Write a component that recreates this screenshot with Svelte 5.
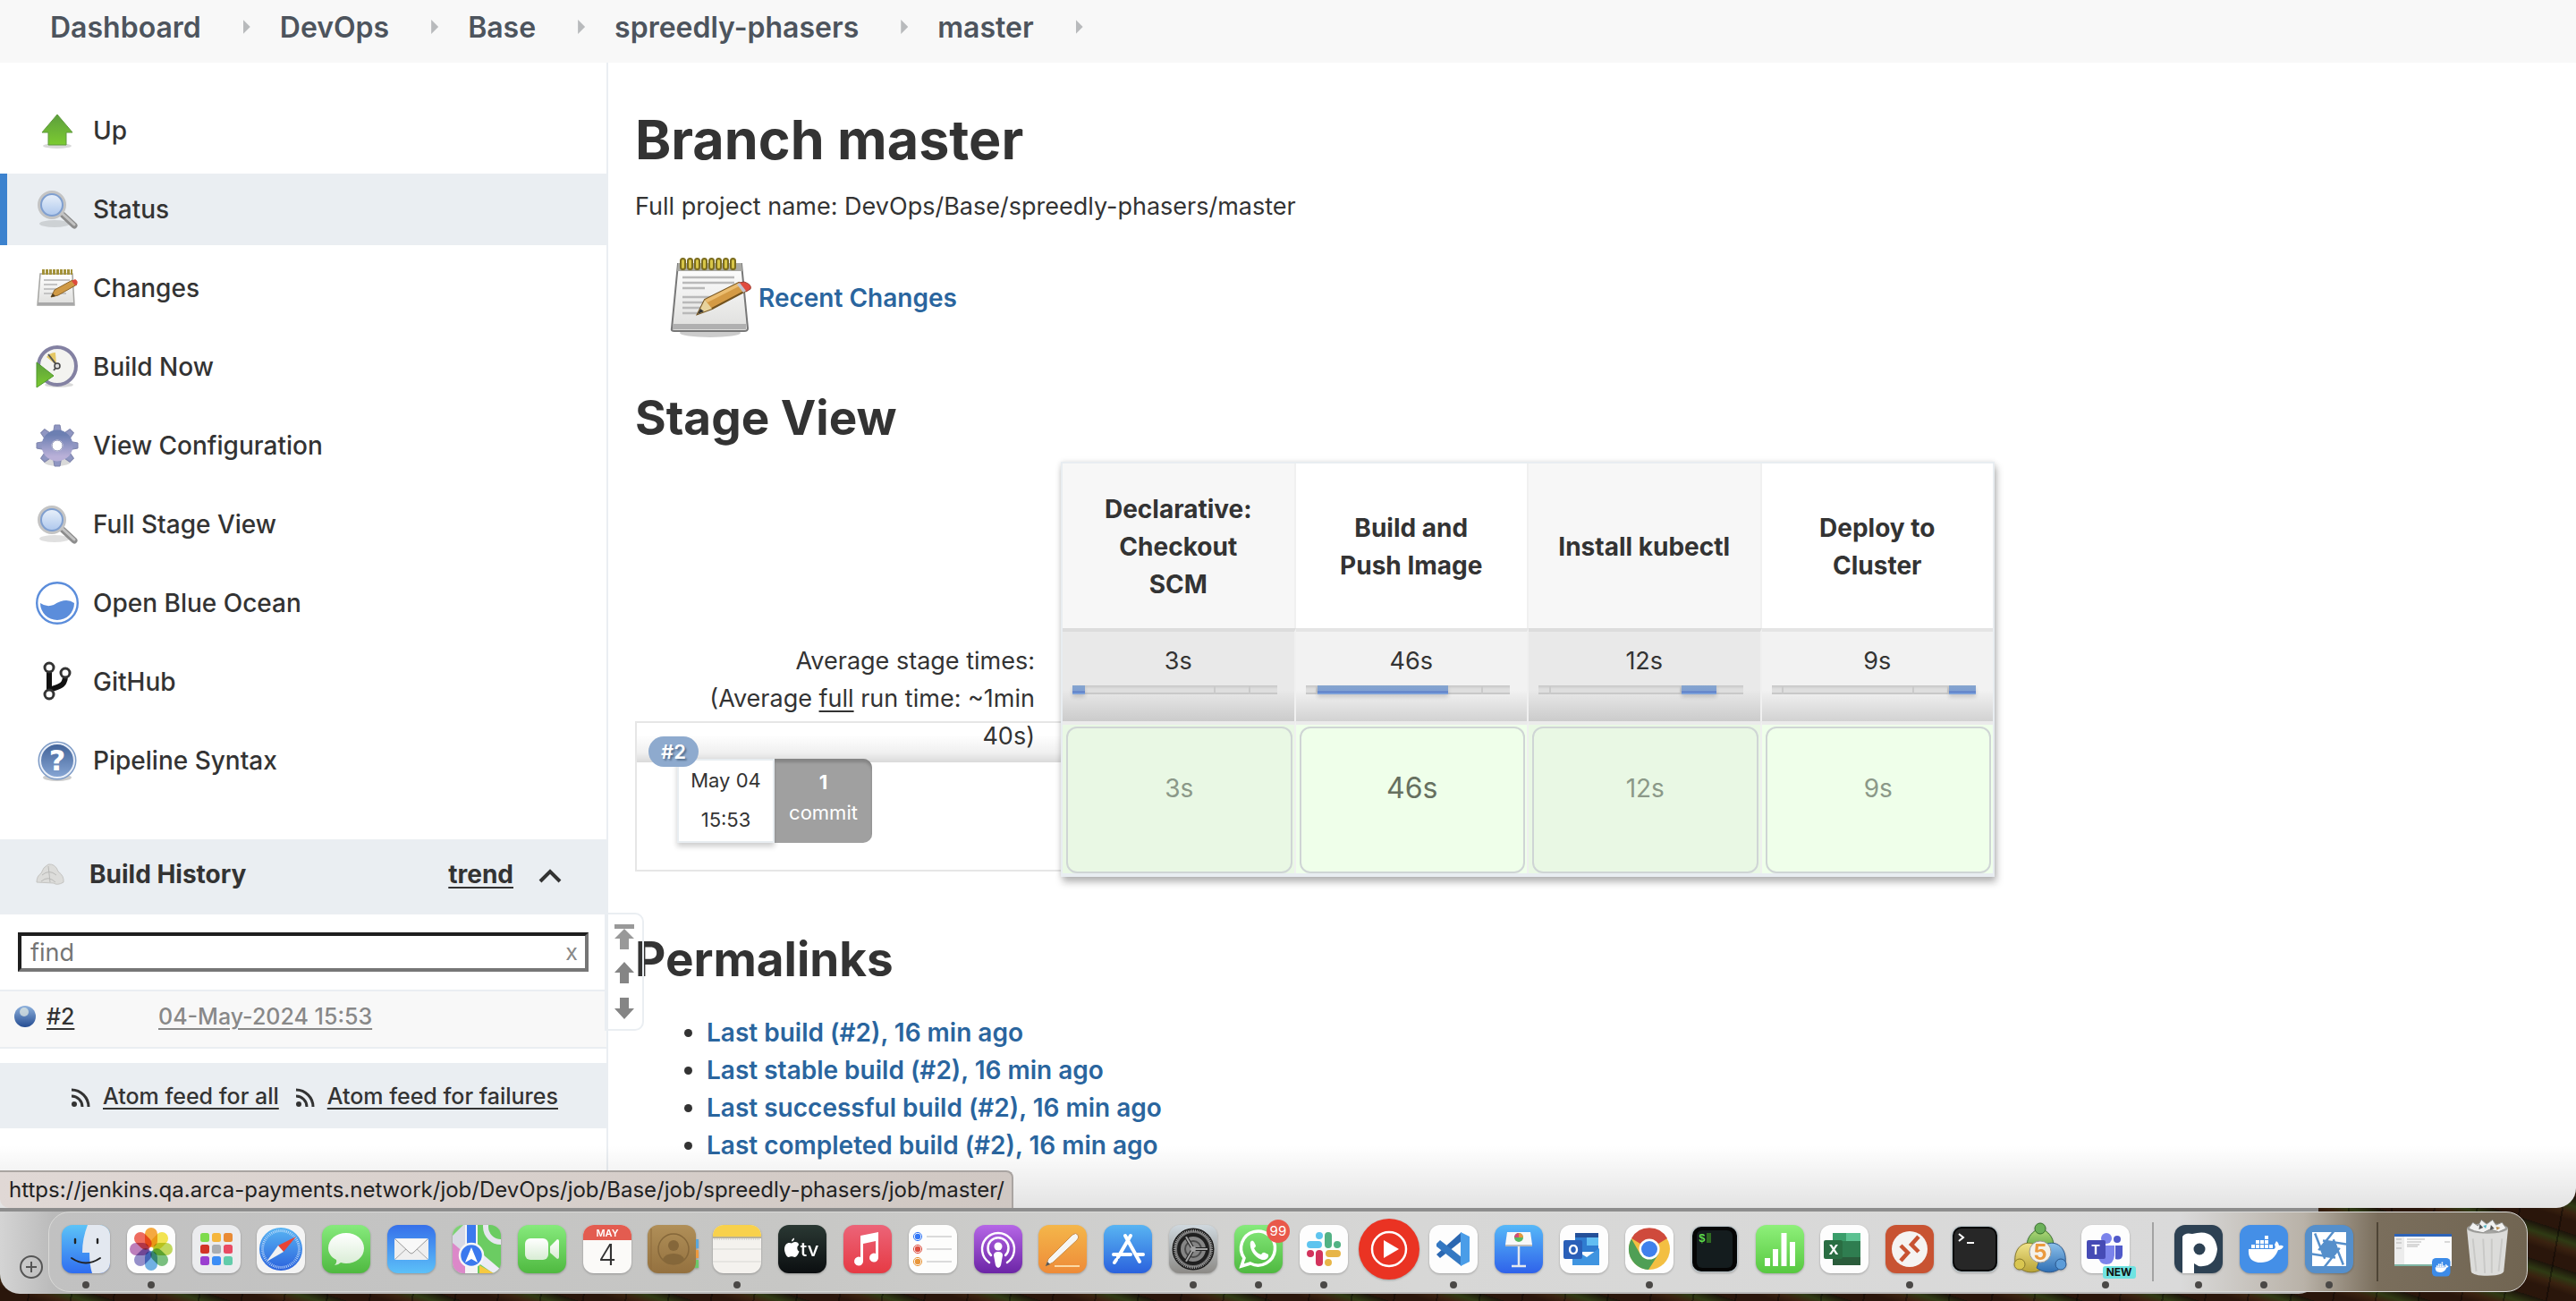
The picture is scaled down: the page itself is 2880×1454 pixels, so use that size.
<script>
  const crumbs = ['Dashboard', 'DevOps', 'Base', 'spreedly-phasers', 'master'];

  const tasks = [
    { icon: 'up', label: 'Up' },
    { icon: 'search', label: 'Status', active: true },
    { icon: 'notepad', label: 'Changes' },
    { icon: 'clock', label: 'Build Now' },
    { icon: 'gear', label: 'View Configuration' },
    { icon: 'search', label: 'Full Stage View' },
    { icon: 'ocean', label: 'Open Blue Ocean' },
    { icon: 'fork', label: 'GitHub' },
    { icon: 'help', label: 'Pipeline Syntax' },
  ];

  // size is the stage's share of the whole run, in percent
  const stages = [
    { name: 'Declarative: Checkout SCM', time: '3s', size: 6 },
    { name: 'Build and Push Image', time: '46s', size: 64 },
    { name: 'Install kubectl', time: '12s', size: 17 },
    { name: 'Deploy to Cluster', time: '9s', size: 13 },
  ];

  const permalinks = [
    'Last build (#2), 16 min ago',
    'Last stable build (#2), 16 min ago',
    'Last successful build (#2), 16 min ago',
    'Last completed build (#2), 16 min ago',
  ];

  const apps = [
    ['finder', 1], ['photos', 1], ['launchpad'], ['safari'], ['messages'], ['mail'], ['maps'], ['facetime'],
    ['calendar'], ['contacts'], ['notes', 1], ['tv'], ['music'], ['reminders'], ['podcasts'], ['pages'],
    ['appstore'], ['settings', 1], ['whatsapp', 1], ['slack', 1], ['ytmusic'], ['vscode', 1], ['keynote'],
    ['outlook'], ['chrome', 1], ['iterm'], ['numbers'], ['excel'], ['remote', 1], ['terminal'],
    ['metatrader'], ['teams', 1],
  ];
  const recent = [['postico', 1], ['docker', 1], ['capture', 1]];

  const petals = ['#f6a12b', '#f3e23e', '#bcd64c', '#6dba72', '#62aae2', '#8b84c6', '#b871b6', '#ee5c4e'];
  const pads = ['#7ddb4c', '#f5b63c', '#e98b35', '#d23427', '#a9adb1', '#e94b63', '#9b3fd0', '#3c8df5', '#62ccaa'];
  const slots = [0, 45, 90, 135, 180, 225, 270, 315];
  const blades = [0, 60, 120, 180, 240, 300];
  const ticks = Array.from({ length: 60 }, (_, i) => i * 6);
</script>

{#snippet taskIcon(name)}
  <svg class="task-icon" viewBox="0 0 48 48" aria-hidden="true">
    {#if name === 'up'}
      <ellipse cx="24" cy="41" rx="16" ry="3" fill="#000" opacity=".15" />
      <path d="M24 6 41 26H34V40H14V26H7Z" fill="url(#g-up)" stroke="#5f9a3c" />
    {:else if name === 'search'}
      <ellipse cx="21" cy="40" rx="17" ry="4" fill="#000" opacity=".12" />
      <path d="M29 29 43 42" stroke="#8d8d8d" stroke-width="7" stroke-linecap="round" />
      <path d="M30 29 43 41" stroke="#c3c3c3" stroke-width="3" stroke-linecap="round" />
      <circle cx="18" cy="19" r="14" fill="url(#g-lens)" stroke="#c4c4c4" stroke-width="4" />
      <circle cx="18" cy="19" r="12" fill="none" stroke="#7f9fd0" stroke-width="2" />
    {:else if name === 'notepad'}
      <path d="M5 8H41L43 43H2Z" fill="url(#g-paper)" stroke="#a5a5a2" stroke-width="1.5" />
      <path d="M2 40H43V43H2Z" fill="#a8a8a8" />
      <path d="M7 6H41" stroke="#a3923a" stroke-width="6" stroke-dasharray="3 1" />
      <path d="M9 15H38M9 20H24M9 25H30M9 30H34" stroke="#c3c3c3" stroke-width="2" />
      <path d="M17 34 21 26 41 15 46 20 25 32Z" fill="#d09a45" stroke="#8c6428" />
      <path d="M40 16 44 14Q48 16 46 20L44 21Z" fill="#dd4a3c" />
      <path d="M17 34 19 30 22 33Z" fill="#4a3a20" />
    {:else if name === 'clock'}
      <ellipse cx="26" cy="44" rx="16" ry="3" fill="#000" opacity=".15" />
      <circle cx="24" cy="23" r="21" fill="#f3f3f0" stroke="#8381a2" stroke-width="4" />
      <path d="M23 22 12 13Q16 8 22 8Z" fill="#e5c865" />
      <path d="M14 10 24 23 20 28" stroke="#555" stroke-width="2" fill="none" />
      <circle cx="24" cy="23" r="3" fill="#ddd" stroke="#444" stroke-width="1.5" />
      <path d="M1 19V47L20 34Z" fill="url(#g-up)" stroke="#4f9a2c" />
    {:else if name === 'gear'}
      <ellipse cx="24" cy="42" rx="15" ry="5" fill="#000" opacity=".15" />
      {#each slots as a}
        <path d="M19 12 21 1H27L29 12Z" fill="#8f96c2" stroke="#7d83ab" transform="rotate({a} 24 24)" />
      {/each}
      <circle cx="24" cy="24" r="12" fill="none" stroke="url(#g-gear)" stroke-width="11" />
      <circle cx="24" cy="24" r="6" fill="#fff" stroke="#8a8fb4" />
    {:else if name === 'ocean'}
      <circle cx="24" cy="24" r="22.8" fill="#fff" stroke="#5b8ddb" stroke-width="2.4" />
      <path d="M5 24Q12 29 20 26Q34 17 43 24A19 19 0 0 1 5 24Z" fill="#5b8ddb" />
    {:else if name === 'fork'}
      <path d="M15 12V34M15 33C26 29 33 29 33 17" stroke="#111" stroke-width="6" fill="none" />
      <circle cx="15" cy="8" r="5" fill="#fff" stroke="#333" stroke-width="3" />
      <circle cx="33" cy="14" r="5" fill="#fff" stroke="#333" stroke-width="3" />
      <circle cx="15" cy="38" r="5" fill="#fff" stroke="#333" stroke-width="3" />
    {:else if name === 'help'}
      <ellipse cx="24" cy="43" rx="16" ry="4" fill="#000" opacity=".2" />
      <circle cx="24" cy="24" r="20" fill="url(#g-help)" stroke="#7d9bc6" stroke-width="3" />
      <circle cx="24" cy="24" r="19" fill="none" stroke="#e8eef8" stroke-width="2" />
      <text x="24" y="35" class="q">?</text>
    {/if}
  </svg>
{/snippet}

{#snippet feed()}
  <svg class="feed" viewBox="0 0 22 22" aria-hidden="true">
    <circle cx="4" cy="18" r="3" fill="#333" />
    <path d="M1 9A12 12 0 0 1 13 21M1 2A19 19 0 0 1 20 21" fill="none" stroke="#333" stroke-width="3" />
  </svg>
{/snippet}

{#snippet tile(fill)}
  <rect width="54" height="54" rx="12" {fill} />
{/snippet}

{#snippet whale()}
  <path d="M10 27H38Q41 26 39 22L41 18Q44 20 44 23Q47 22 49 24Q47 28 43 28C39 38 32 42 24 42C14 42 9 37 10 27Z" fill="#fff" />
  <path d="M13 22h4v4h-4zM18 22h4v4h-4zM23 22h4v4h-4zM28 22h4v4h-4zM33 22h4v4h-4zM18 17h4v4h-4zM23 17h4v4h-4zM28 17h4v4h-4zM28 12h4v4h-4z" fill="#fff" />
{/snippet}

{#snippet appIcon(name)}
  <svg class="app" viewBox="0 0 54 54" role="img" aria-label={name}>
    {#if name === 'finder'}
      {@render tile('url(#d-finder)')}
      <path d="M29 0C25 10 23 20 23 31H31C31 40 32 48 34 54H42A12 12 0 0 0 54 42V12A12 12 0 0 0 42 0Z" fill="#e3e8f0" />
      <path d="M15 16V20M40 16V20" stroke="#222" stroke-width="2.4" stroke-linecap="round" />
      <path d="M11 37Q27 48 43 37" stroke="#222" stroke-width="2" fill="none" stroke-linecap="round" />
    {:else if name === 'photos'}
      {@render tile('#fdfdfd')}
      {#each petals as p, i}
        <rect class="petal" x="20" y="3" width="14" height="22" rx="7" fill={p} transform="rotate({i * 45} 27 27)" />
      {/each}
    {:else if name === 'launchpad'}
      {@render tile('#ebecee')}
      {#each pads as p, i}
        <rect x={9 + (i % 3) * 13} y={9 + Math.floor(i / 3) * 13} width="10" height="10" rx="2.5" fill={p} />
      {/each}
    {:else if name === 'safari'}
      {@render tile('#f4f4f4')}
      <circle cx="27" cy="27" r="24" fill="url(#d-blue)" />
      {#each ticks as t}
        <path d="M27 5V8" stroke="#cfe4fb" stroke-width=".8" transform="rotate({t} 27 27)" />
      {/each}
      <path d="M44 13 24 23 30 30Z" fill="#ea4335" />
      <path d="M11 41 24 23 30 30Z" fill="#f2f2f2" />
    {:else if name === 'messages'}
      {@render tile('url(#d-green)')}
      <path d="M27 9C38 9 47 16 47 26S38 43 27 43Q24 43 21 42 18 45 14 45 17 42 16 39C10 36 7 31 7 26 7 16 16 9 27 9Z" fill="url(#d-white)" />
    {:else if name === 'mail'}
      {@render tile('url(#d-mail)')}
      <rect x="8" y="15" width="38" height="24" rx="2" fill="#efefef" />
      <path d="M9 38 22 26M45 38 32 26" stroke="#aaa" fill="none" />
      <path d="M9 16 25 31Q27 33 29 31L45 16" fill="#f8f8f8" stroke="#999" />
    {:else if name === 'maps'}
      <clipPath id="c-maps"><rect width="54" height="54" rx="12" /></clipPath>
      <g clip-path="url(#c-maps)">
        <rect width="54" height="54" fill="#6bcc62" />
        <path d="M0 0H14V54H0Z" fill="#d8d9e4" />
        <path d="M0 12 12 0H0Z" fill="#7ed274" />
        <path d="M0 20 14 32V54H0Z" fill="#dc88c9" />
        <path d="M14 0H28V54H14Z" fill="#f4f4f4" />
        <path d="M16 0H26V26H16Z" fill="#3b79ee" />
        <path d="M28 28 54 50V60L28 42Z" fill="#ececf4" />
        <path d="M30 45 46 54H30Z" fill="#f6c940" />
        <circle cx="54" cy="2" r="17" fill="none" stroke="#e6e6ee" stroke-width="6" />
        <circle cx="21" cy="34" r="13" fill="#3b79ee" stroke="#f6f6f6" stroke-width="2.5" />
        <path d="M21 25 28 42 21 38 14 42Z" fill="#fff" />
      </g>
    {:else if name === 'facetime'}
      {@render tile('url(#d-green)')}
      <rect x="8" y="15" width="26" height="24" rx="6" fill="url(#d-white)" />
      <path d="M36 24 44 16Q46 16 46 18V36Q46 38 44 38L36 31Z" fill="url(#d-white)" />
    {:else if name === 'calendar'}
      {@render tile('#fbfaf8')}
      <path d="M0 17V12A12 12 0 0 1 12 0H42A12 12 0 0 1 54 12V17Z" fill="#e35c50" />
      <text x="27" y="13" class="may">MAY</text>
      <text x="27" y="45" class="day">4</text>
    {:else if name === 'contacts'}
      <path d="M50 16h7v10h-7z" fill="#5aa7dd" /><path d="M50 28h7v9h-7z" fill="#ee9a3e" /><path d="M50 39h7v9h-7z" fill="#6cc96a" />
      {@render tile('url(#d-brown)')}
      <path d="M4 4V50" stroke="#8f6d3c" />
      <circle cx="29" cy="27" r="17" fill="none" stroke="#85673a" stroke-width="1.5" />
      <circle cx="29" cy="23" r="6" fill="#85673a" />
      <path d="M17 38Q20 32 29 32T41 38Q36 44 29 44T17 38Z" fill="#85673a" />
    {:else if name === 'notes'}
      {@render tile('#f4f2ee')}
      <path d="M0 13V12A12 12 0 0 1 12 0H42A12 12 0 0 1 54 12V13Z" fill="#f8d14c" />
      <path d="M0 14H54" stroke="#a79c7c" stroke-width="1.5" />
      <path d="M1 16H53" stroke="#bbb" stroke-dasharray="1 1" />
      <path d="M0 27H54M0 41H54" stroke="#d8d8d4" />
    {:else if name === 'tv'}
      {@render tile('url(#d-dark)')}
      <path d="M16 20C18 18.5 23 18.5 23 22.5 20.5 24 21 28.5 23.5 29.5 22.5 33 20.5 36 18.5 36 17 36 16.5 35.3 15 35.3S13 36 11.7 36C9.5 36 7 31 7 27 7 22 10.5 19.5 13 20 14.5 20.5 15 20.5 16 20ZM15 18.5Q15 15.5 18 14.5 18.3 17.5 15 18.5Z" fill="#fff" />
      <text x="35" y="35" class="tv">tv</text>
    {:else if name === 'music'}
      {@render tile('url(#d-red)')}
      <path d="M19 12 39 8V36A5 5 0 1 1 36 32V18L22 21V40A5 5 0 1 1 19 36Z" fill="#fff" />
    {:else if name === 'reminders'}
      {@render tile('#fdfdfc')}
      {#each ['#3478f6', '#dd4f40', '#e8963a'] as c, i}
        <circle cx="10" cy={13 + i * 14} r="3.2" fill={c} />
        <circle cx="10" cy={13 + i * 14} r="4.6" fill="none" stroke={c} />
        <path d="M20 {13 + i * 14}H48" stroke="#c4c4c4" stroke-width="1.2" />
      {/each}
    {:else if name === 'podcasts'}
      {@render tile('url(#d-purple)')}
      <path d="M17 42A18 18 0 1 1 37 42M19 34A11.5 11.5 0 1 1 35 34" fill="none" stroke="#fff" stroke-width="2.5" stroke-linecap="round" />
      <circle cx="27" cy="24" r="4.5" fill="#fff" />
      <path d="M22 34Q22 30 27 30T32 34L30 45Q29 48 27 48T24 45Z" fill="#fff" />
    {:else if name === 'pages'}
      {@render tile('url(#d-orange)')}
      <path d="M8 46 11 38 38 11Q42 8 44 11T43 17L16 42Z" fill="#f6f6f4" stroke="#c98c46" />
      <path d="M8 46 10 41 13 44Z" fill="#555" />
      <path d="M18 46H46" stroke="#fbd9a4" stroke-width="2" />
    {:else if name === 'appstore'}
      {@render tile('url(#d-blue)')}
      <path d="M24 12 40 41M30 12 16 36M11 33H30M36 33H44M14 39 12 42" stroke="#fff" stroke-width="4" stroke-linecap="round" />
    {:else if name === 'settings'}
      {@render tile('url(#d-steel)')}
      <circle cx="27" cy="27" r="22" fill="#6b6b6b" stroke="#1c1c1c" stroke-width="3" />
      <circle cx="27" cy="27" r="20.5" fill="none" stroke="#9c9c9c" stroke-width="3" stroke-dasharray="1 1" />
      <circle cx="27" cy="27" r="16" fill="#858585" stroke="#1f1f1f" stroke-width="4" />
      <circle cx="27" cy="27" r="9" fill="none" stroke="#4a4a4a" stroke-width="2" />
      {#each [0, 120, 240] as a}
        <path d="M27 27H43" stroke="#1f1f1f" stroke-width="4" transform="rotate({a} 27 27)" />
        <path d="M27 27H43" stroke="#a2a2a2" stroke-width="2" transform="rotate({a} 27 27)" />
      {/each}
      <circle cx="27" cy="27" r="3" fill="#a2a2a2" />
    {:else if name === 'whatsapp'}
      {@render tile('url(#d-green)')}
      <path d="M8 46 11 37A19 19 0 1 1 18 43Z" fill="none" stroke="#fff" stroke-width="3.5" />
      <path d="M18 19Q20 16 22 19L24 23Q24 25 22 26 25 32 30 33 32 30 34 31L38 33Q39 37 34 39C27 40 16 30 18 19Z" fill="#fff" />
    {:else if name === 'slack'}
      {@render tile('#fdfdfd')}
      <g fill="none" stroke-width="8" stroke-linecap="round">
        <path d="M12 22H21M22 12v.1" stroke="#5ec4ee" />
        <path d="M32 12V22M42 22h.1" stroke="#52b284" />
        <path d="M42 32H33M32 42v.1" stroke="#e7b548" />
        <path d="M22 42V32M12 32h.1" stroke="#d2335c" />
      </g>
    {:else if name === 'ytmusic'}
      <circle cx="27" cy="27" r="34" fill="#ea3323" />
      <circle cx="27" cy="27" r="19" fill="none" stroke="#fff" stroke-width="2.5" />
      <path d="M21 17V37L38 27Z" fill="#fff" />
    {:else if name === 'vscode'}
      {@render tile('#fdfdfd')}
      <path d="M8 33 36 8V18L12 37Z" fill="#2b67b1" />
      <path d="M8 21 12 17 36 36V46L8 24Z" fill="#3478c2" />
      <path d="M35 8 45 13V41L35 46Z" fill="#4a9de8" />
    {:else if name === 'keynote'}
      {@render tile('url(#d-key)')}
      <path d="M14 8H40L42 22H12Z" fill="#f8f8f8" /><path d="M12 22H42V24H12Z" fill="#bbb" />
      <circle cx="27" cy="14" r="5" fill="#57b760" /><path d="M27 14V9A5 5 0 0 1 32 14Z" fill="#e8963a" /><path d="M27 14H22A5 5 0 0 1 27 9Z" fill="#d44b76" />
      <path d="M27 24V46M19 46H35" stroke="#e4e8ee" stroke-width="2.5" />
    {:else if name === 'outlook'}
      {@render tile('#fdfdfd')}
      <path d="M17 9H43V30H17Z" fill="#2f7cd0" /><path d="M17 9H43V14H17Z" fill="#234f98" />
      <path d="M30 14H43V23H30Z" fill="#61bdf2" /><path d="M14 26 30 36 44 26V45H14Z" fill="#3f94e0" />
      <rect x="4" y="17" width="21" height="21" rx="2" fill="#2a5fb8" />
      <text x="15" y="33" class="letter">O</text>
    {:else if name === 'chrome'}
      {@render tile('#fdfdfd')}
      <circle cx="27" cy="27" r="23" fill="#f3bf42" />
      <path d="M27 27 7 15A23 23 0 0 1 47 15Z" fill="#cf4a3c" />
      <path d="M27 27 17 33 7 15.5A23 23 0 0 0 26 50L37 33Z" fill="#4f9f55" />
      <circle cx="27" cy="27" r="11.5" fill="#fff" /><circle cx="27" cy="27" r="9" fill="#4080ec" />
    {:else if name === 'iterm' || name === 'terminal'}
      <rect x="1" y="1" width="52" height="52" rx="11" fill="#b9c4c9" />
      <rect x="2" y="2" width="50" height="50" rx="10" fill="#050505" />
      {#if name === 'iterm'}
        <rect x="7" y="6" width="40" height="42" rx="6" fill="#141c1e" />
        <text x="9" y="19" class="mono green">$</text><path d="M18 9H23V20H18Z" fill="#2f6b22" />
      {:else}
        <rect x="4" y="4" width="46" height="46" rx="8" fill="#272727" />
        <path d="M9 10 14 14 9 18M18 20H26" stroke="#fff" stroke-width="2" fill="none" />
      {/if}
    {:else if name === 'numbers'}
      {@render tile('url(#d-lime)')}
      <path d="M13 46V37M22 46V27M31.5 46V9M41 46V19" stroke="#fff" stroke-width="6" />
    {:else if name === 'excel'}
      {@render tile('#fdfdfd')}
      <rect x="14" y="9" width="31" height="36" rx="2" fill="#2f7d50" />
      <path d="M29 9H45V18H29Z" fill="#5cc191" /><path d="M14 9H29V18H14Z" fill="#3a9d6a" /><path d="M14 36H45V45H14Z" fill="#2a5c3b" />
      <rect x="4" y="17" width="21" height="21" rx="2" fill="#2a6e43" />
      <text x="15" y="33" class="letter">X</text>
    {:else if name === 'remote'}
      {@render tile('#c85332')}
      <circle cx="27" cy="27" r="20" fill="#f5f3f2" />
      <path d="M17 23 25 31 17 40M37 13 29 22 37 30" stroke="#c85332" stroke-width="4.5" fill="none" />
    {:else if name === 'metatrader'}
      <path d="M27 4C13 8 8 24 16 32H38C46 24 41 8 27 4Z" fill="url(#d-moss)" stroke="#35702a" />
      <circle cx="27" cy="4" r="6" fill="#6cb15a" stroke="#35702a" />
      <path d="M-1 42C-3 26 9 16 21 22L31 48C20 56 6 54 -1 42Z" fill="url(#d-gold)" stroke="#86772a" />
      <circle cx="4" cy="44" r="6" fill="#d9c650" stroke="#86772a" />
      <path d="M55 42C57 26 45 16 33 22L23 48C34 56 48 54 55 42Z" fill="url(#d-azure)" stroke="#29568c" />
      <circle cx="50" cy="44" r="6" fill="#5c9cd8" stroke="#29568c" />
      <circle cx="27" cy="30" r="12" fill="#f4f1ea" stroke="#999" />
      <text x="27" y="39" class="five">5</text>
    {:else if name === 'teams'}
      {@render tile('#fdfdfd')}
      <circle cx="28" cy="15" r="6" fill="#7b83eb" /><circle cx="40" cy="16" r="4" fill="#5059c9" />
      <path d="M18 23H37V34Q36 44 28 44T18 34Z" fill="#7b83eb" /><path d="M38 23H46V34Q45 40 38 38Z" fill="#5059c9" />
      <rect x="6" y="17" width="21" height="21" rx="2" fill="#464bb5" />
      <text x="16" y="33" class="letter">T</text>
    {:else if name === 'postico'}
      {@render tile('#2d4153')}
      <path d="M9 54V13Q12 8 20 10 45 3 48 27 46 48 27 46L22 43V54Z" fill="#fff" />
      <circle cx="28" cy="27" r="6.5" fill="#2d4153" />
    {:else if name === 'docker'}
      {@render tile('#448fe7')}
      {@render whale()}
    {:else if name === 'capture'}
      {@render tile('#558fcb')}
      <path d="M8 8H46V46H8Z" fill="#fff" />
      <circle cx="27" cy="27" r="9" fill="#558fcb" />
      <clipPath id="c-cap"><path d="M8 8H46V46H8Z" /></clipPath>
      <g clip-path="url(#c-cap)">
        {#each blades as a}
          <path d="M20 17.5 50 22" stroke="#558fcb" stroke-width="2.5" transform="rotate({a} 27 27)" />
        {/each}
      </g>
    {/if}
  </svg>
{/snippet}

<svg class="defs" aria-hidden="true">
  <defs>
    {#each [
      ['g-up', '#5c9e3d', '#7ccb30'], ['g-paper', '#ffffff', '#dededc'], ['g-gear', '#6c7fb2', '#b9b0d8'],
      ['g-help', '#3f6096', '#89a8d6'], ['g-lens', '#eef4fb', '#a9c4ec'], ['g-ball', '#8fb2dd', '#244c92'],
      ['d-finder', '#5cc3f7', '#2f6df0'], ['d-blue', '#58b4f2', '#2b62dd'], ['d-green', '#86ea7c', '#4fb940'],
      ['d-white', '#ffffff', '#d8ecd4'], ['d-mail', '#3670ea', '#5cc0f8'], ['d-brown', '#b08f58', '#94713f'],
      ['d-dark', '#2a3833', '#0b0e10'], ['d-red', '#ec6478', '#e63a44'], ['d-purple', '#b566e6', '#6c25a6'],
      ['d-orange', '#f4b64a', '#ee8b38'], ['d-steel', '#cfd8de', '#8c8a86'], ['d-key', '#56b8f8', '#2f62ea'],
      ['d-lime', '#8ef07a', '#57c840'], ['d-moss', '#b5dc7c', '#4f9a3c'], ['d-gold', '#f0e38a', '#b9a436'],
      ['d-azure', '#8cc0ea', '#2f6fb4'],
    ] as [id, from, to]}
      <linearGradient {id} x1="0" y1="0" x2="0" y2="1">
        <stop offset="0" stop-color={from} /><stop offset="1" stop-color={to} />
      </linearGradient>
    {/each}
  </defs>
</svg>

<div class="desktop">
  <div class="window">
    <nav class="crumbs" aria-label="Breadcrumb">
      {#each crumbs as crumb}
        <a href="#top">{crumb}</a><span class="tri"></span>
      {/each}
    </nav>

    <div class="body">
      <aside>
        <nav class="tasks" aria-label="Tasks">
          {#each tasks as task}
            <a href="#top" class:active={task.active}>{@render taskIcon(task.icon)}{task.label}</a>
          {/each}
        </nav>

        <section class="history">
          <header>
            <svg class="cloud" viewBox="0 0 32 24" aria-hidden="true">
              <path d="M1 21Q1 14 6 11 8 4 14 1 22 0 25 9 32 14 31 21 24 25 20 22Z" fill="#dcdcda" stroke="#c4c4c2" />
              <path d="M7 13Q15 6 23 13M14 3 16 21M6 20Q14 13 22 21" fill="none" stroke="#b9b9b7" />
            </svg>
            <strong>Build History</strong>
            <a href="#top">trend</a>
            <button aria-label="Collapse">
              <svg viewBox="0 0 26 16"><path d="M2 14 13 3 24 14" fill="none" stroke="#333" stroke-width="4" /></svg>
            </button>
          </header>
          <div class="find">
            <input type="text" placeholder="find" aria-label="Find build" />
            <button aria-label="Clear">x</button>
          </div>
          <div class="build">
            <svg viewBox="0 0 26 26" aria-hidden="true"><circle cx="13" cy="13" r="12" fill="url(#g-ball)" /><circle cx="12" cy="8" r="5" fill="#e8eee4" opacity=".7" /></svg>
            <a href="#top" class="num">#2</a>
            <a href="#top" class="date">04-May-2024 15:53</a>
          </div>
          <div class="feeds">
            {@render feed()}<a href="#top">Atom feed for all</a>
            {@render feed()}<a href="#top">Atom feed for failures</a>
          </div>
          <div class="mover">
            <button aria-label="Newest"><svg viewBox="0 0 24 28"><path d="M1 0H23V5H1ZM12 5 23 16H17V28H7V16H1Z" fill="#999" /></svg></button>
            <button aria-label="Newer"><svg viewBox="0 0 24 28"><path d="M12 2 23 14H17V26H7V14H1Z" fill="#858585" /></svg></button>
            <button aria-label="Older"><svg viewBox="0 0 24 28"><path d="M12 26 1 14H7V2H17V14H23Z" fill="#858585" /></svg></button>
          </div>
        </section>
      </aside>

      <main>
        <h1>Branch master</h1>
        <p>Full project name: DevOps/Base/spreedly-phasers/master</p>
        <a class="changes" href="#top">
          <svg viewBox="0 0 96 96" aria-hidden="true">
            <ellipse cx="46" cy="87" rx="34" ry="5" fill="#000" opacity=".2" />
            <path d="M10 10H81L88 82Q88 85 84 85H6Q2 85 3 82Z" fill="url(#g-paper)" stroke="#777" stroke-width="2" />
            <path d="M4 77H86V83H4Z" fill="#b0b0b0" />
            <path d="M10 9H81L82 18H9Z" fill="#a9a9a4" />
            <g fill="#d8c648" stroke="#7b6c1e" stroke-width="2">
              {#each [13, 21, 29, 37, 45, 53, 61, 69] as x}<rect {x} y="4" width="5" height="12" rx="2.5" />{/each}
            </g>
            <path d="M15 25H73M15 31H73M15 37H40M15 47H60M15 53H54M15 59H50M15 65H34" stroke="#b9b9b9" stroke-width="2.5" />
            <path d="M32 66 40 50 78 31 86 40 48 60Z" fill="#d49a44" stroke="#73521d" stroke-width="2" />
            <path d="M40 50 78 31 80 34 43 53Z" fill="#ebbd70" />
            <path d="M78 31 84 30Q93 33 91 38L86 41Z" fill="#e04b3e" stroke="#9b3b30" />
            <path d="M76 33 79 31 86 40 83 42Z" fill="#c3c3cc" />
            <path d="M32 66 40 50 48 60Z" fill="#e8d39c" /><path d="M32 66 35 60 39 63Z" fill="#333" />
          </svg>
          Recent Changes
        </a>

        <h2>Stage View</h2>
        <table>
          <colgroup><col class="label-col" /><col /><col /><col /><col /></colgroup>
          <thead>
            <tr>
              <td></td>
              {#each stages as s}<th scope="col">{s.name}</th>{/each}
            </tr>
          </thead>
          <tbody>
            <tr class="avg">
              <td class="label"><div>Average stage times:<br />(Average <u>full</u> run time: ~1min 40s)</div></td>
              {#each stages as s}
                <td>
                  {s.time}
                  <div class="bar">
                    {#each stages as t}
                      <span class:on={t === s} style="width: {t.size}%"></span>
                    {/each}
                  </div>
                </td>
              {/each}
            </tr>
            <tr class="run">
              <td class="meta">
                <div class="panel">
                  <div class="card">
                    <div class="when">May 04<br />15:53</div>
                    <div class="commits"><b>1</b><br />commit</div>
                    <span class="badge">#2</span>
                  </div>
                </div>
              </td>
              {#each stages as s, i}
                <td><div class="ok" class:big={i === 1}>{s.time}</div></td>
              {/each}
            </tr>
          </tbody>
        </table>

        <h2 class="perma">Permalinks</h2>
        <ul>
          {#each permalinks as link}<li><a href="#top">{link}</a></li>{/each}
        </ul>
      </main>
    </div>
    <div class="status">https://jenkins.qa.arca-payments.network/job/DevOps/job/Base/job/spreedly-phasers/job/master/</div>
  </div>

  <div class="shelf">
    <div class="behind"></div>
    <svg class="plus" viewBox="0 0 28 28" aria-hidden="true"><circle cx="14" cy="14" r="12" fill="none" stroke="#555" stroke-width="2" /><path d="M14 8V20M8 14H20" stroke="#555" stroke-width="2" /></svg>
    <div class="dock">
      <div class="apps">
        {#each apps as [name, open]}
          <div class="slot" class:open>
            {@render appIcon(name)}
            {#if name === 'whatsapp'}<span class="count">99</span>{/if}
            {#if name === 'teams'}<span class="new">NEW</span>{/if}
          </div>
        {/each}
      </div>
      <i></i>
      <div class="apps few">
        {#each recent as [name, open]}
          <div class="slot" class:open>{@render appIcon(name)}</div>
        {/each}
      </div>
      <i class="dim"></i>
      <svg class="thumb" viewBox="0 0 64 54" role="img" aria-label="Minimized window">
        <path d="M0 10H64V46H0Z" fill="#fcfcfc" /><path d="M0 10H64V13H0Z" fill="#2d63b8" />
        <path d="M0 13H11V46H0Z" fill="#ececec" /><path d="M0 44H42V46H0Z" fill="#7fb5a4" />
        <path d="M14 16H34M14 19H30M14 22H28M14 24H26M56 19H62M2 16H8M2 20H8M2 26H8" stroke="#b5b5b5" />
        <g transform="translate(42 37) scale(.38)">{@render tile('#3c8be8')}{@render whale()}</g>
      </svg>
      <svg class="trash" viewBox="0 0 50 66" role="img" aria-label="Trash">
        <path d="M1 10 6 60Q8 65 25 65T44 60L49 10Z" fill="#dcdcda" />
        <path d="M8 22 12 60M20 22 22 62M42 22 38 60M30 22V62" stroke="#c9c9c7" stroke-width="2" />
        <ellipse cx="25" cy="10" rx="24" ry="6" fill="#a3a3a0" />
        <path d="M3 10 8 3 14 7 18 0 24 5 31 0 35 6 42 3 47 10 38 14 28 11 20 15 10 13Z" fill="#f1f1f0" stroke="#8b8b88" />
        <path d="M16 5 20 9 15 11ZM29 6 33 10 28 12Z" fill="#555" /><path d="M20 7 24 6 23 10Z" fill="#4fb3c4" /><path d="M35 8 40 9 36 12Z" fill="#b98b4c" />
      </svg>
    </div>
  </div>
</div>

<style>
  :global(body) { background: #24150b; }
  * { box-sizing: border-box; }
  a { color: inherit; text-decoration: none; }
  button { padding: 0; border: 0; background: none; font: inherit; color: inherit; }
  .defs { position: absolute; width: 0; height: 0; }
  .desktop {
    min-height: 100vh; display: flex; flex-direction: column;
    font: 400 27px/42px Inter, "Liberation Sans", sans-serif; color: #333;
    background:
      repeating-linear-gradient(100deg, rgba(0, 0, 0, .35) 0 2px, transparent 2px 47px),
      repeating-linear-gradient(18deg, #2a160b 0 14px, #3a2210 22px, #2f3a14 30px, #1c130a 40px);
  }
  .window {
    position: relative; flex: 1; display: flex; flex-direction: column;
    overflow: hidden; background: #fff; border-bottom-right-radius: 22px;
  }
  .window::after {
    content: ""; position: absolute; inset: auto 0 0 0; height: 70px; pointer-events: none;
    background: linear-gradient(to bottom, rgba(0, 0, 0, 0), rgba(0, 0, 0, .11));
  }
  .crumbs {
    display: flex; height: 70px; padding-left: 56px; background: #f8f8f8;
    font-size: 32px; font-weight: 600; line-height: 62px; color: #4d545d;
  }
  .tri { margin: 22px 33px 0 47px; width: 8px; height: 16px; background: #b8babc; clip-path: polygon(0 0, 100% 50%, 0 100%); }
  .body { flex: 1; display: flex; }
  aside { position: relative; width: 680px; flex: none; border-right: 2px solid #eaeef2; }
  .tasks { display: flex; flex-direction: column; gap: 8px; padding-top: 36px; font-size: 28px; font-weight: 500; }
  .tasks a { display: flex; align-items: center; gap: 16px; height: 80px; padding-left: 40px; }
  .tasks a.active { background: #eaeef2; box-shadow: inset 8px 0 #3c82ce; }
  .task-icon { width: 48px; height: 48px; }
  .q { font: 700 32px "DejaVu Sans", sans-serif; fill: #fff; text-anchor: middle; }

  .history { position: relative; margin-top: 48px; }
  .history header { display: flex; align-items: center; height: 84px; padding: 0 50px 6px 40px; background: #eaeef2; font-size: 28px; font-weight: 700; }
  .cloud { width: 32px; height: 24px; margin-right: 28px; }
  .history strong { flex: 1; font-weight: 700; }
  .history header a, .build a, .feeds a { text-decoration: underline; text-decoration-thickness: 2px; text-underline-offset: 4px; }
  .history header button { width: 26px; height: 42px; margin-left: 28px; }
  .find { position: relative; margin: 20px; }
  .find input {
    display: block; width: 100%; height: 44px; padding: 0 10px; font: inherit; color: #333;
    border: 4px solid; border-color: #1e1e1e #767676 #767676 #1e1e1e; border-radius: 0; background: #fff;
  }
  .find input::placeholder { color: #757575; opacity: 1; }
  .find button { position: absolute; right: 12px; top: 0; color: #888; font-size: 25px; line-height: 44px; }
  .build {
    display: flex; align-items: center; height: 66px; padding: 0 0 6px 15px; background: #f8f8f8;
    border: solid #eaeef2; border-width: 2px 0; font-size: 25px; font-weight: 500;
  }
  .build svg { width: 26px; height: 26px; margin-right: 11px; }
  .build .num { width: 125px; }
  .build .date { color: #888; }
  .feeds { display: flex; align-items: center; height: 73px; margin-top: 16px; padding-left: 79px; background: #eaeef2; font-size: 25px; font-weight: 500; }
  .feeds a { margin-right: 18px; }
  .feed { width: 22px; height: 22px; margin: 4px 14px 0 0; }
  .mover {
    position: absolute; top: 82px; right: -42px; z-index: 1; display: flex; flex-direction: column; align-items: center; gap: 12px;
    width: 44px; height: 132px; padding-top: 11px; border: 2px solid #eaeef2; border-radius: 0 10px 10px 0;
  }
  .mover button, .mover svg { display: block; width: 24px; height: 28px; }

  main { flex: 1; padding: 46px 30px 40px; }
  h1, h2, p, ul { margin: 0; }
  h1 { font-size: 61px; line-height: 80px; font-weight: 700; }
  h2 { font-size: 53px; line-height: 72px; font-weight: 700; }
  p { margin-top: 14px; }
  .changes { display: flex; align-items: center; gap: 4px; width: max-content; margin: 31px 0 48px 38px; height: 100px; color: #2a659e; font-size: 28px; font-weight: 600; }
  .changes svg { width: 96px; height: 96px; }
  table { position: relative; width: 1520px; margin-top: 13px; table-layout: fixed; border-collapse: separate; border-spacing: 0; text-align: center; }
  table::after {
    content: ""; position: absolute; inset: 0 0 0 476px; pointer-events: none;
    border: 2px solid #e8edf1; border-bottom-width: 4px; box-shadow: 2px 6px 8px rgba(0, 0, 0, .28), 0 0 6px rgba(0, 0, 0, .1);
  }
  .label-col { width: 478px; }
  th, td { padding: 0; border-right: 2px solid #f0f0f0; }
  td:first-child { border-right: 0; }
  th { height: 186px; padding: 4px 30px 0; font-size: 28px; font-weight: 700; }
  tr > :nth-child(even) { background-color: #f7f7f7; }
  .avg td { height: 104px; padding: 12px 0 0; vertical-align: top; border-top: 4px solid #e4e4e4; background: linear-gradient(#f2f2f2 65%, #d2d2d2); }
  .avg td:nth-child(even) { border-top-color: #dcdcdc; background: linear-gradient(#e9e9e9 65%, #cbcbcb); }
  .avg td.label { border-top-color: transparent; background: none; padding: 12px 31px 0 0; }
  .label div { position: relative; z-index: 1; height: 84px; margin-left: 40px; text-align: right; }
  u { text-underline-offset: 4px; text-decoration-thickness: 2px; }
  .bar { display: flex; height: 10px; margin: 6px 19px 0 11px; background: linear-gradient(#c6c6c6, #dedede 40% 80%, #c8c8c8 80%); }
  .bar span { border-right: 2px solid #cacaca; }
  .bar span:last-child { border-right: 0; }
  .bar .on { border-right: 0; background: linear-gradient(#86a5ce, #7f9fd2 60%, #4a6dc4 80%, #7b9fd8 82%); box-shadow: 0 3px 4px rgba(0, 0, 0, .15); }
  .run td { height: 174px; padding: 2px 2px 4px 4px; border-top: 4px solid #ebebeb; background: #efffea; }
  .run td:nth-child(even) { background: #e9f8e4; }
  .ok { height: 164px; padding-top: 46px; border: 2px solid #cfd5d5; border-radius: 12px; color: #8b9888; font-size: 28px; }
  .ok.big { font-size: 32px; color: #66705f; }
  .run td.meta { padding: 0 2px 0 0; vertical-align: top; text-align: left; border: 0; background: none; }
  .panel {
    height: 168px; padding: 40px 0 0 45px; border: 2px solid #e6e6e6; border-right: 0;
    background: linear-gradient(#fff 30%, #f0f0f0 75%, #dadada) 0 0 / 100% 44px no-repeat #fff;
  }
  .card { position: relative; display: flex; width: 218px; height: 94px; font-size: 22px; text-align: center; }
  .when { width: 109px; line-height: 44px; background: #fff; border: 2px solid #e8edf1; box-shadow: 0 4px 6px rgba(0, 0, 0, .2); }
  .commits { width: 109px; padding-top: 9px; line-height: 34px; color: #fff; background: #a0a0a0; border-radius: 0 10px 10px 0; box-shadow: inset 0 4px 3px #858585; }
  .badge { position: absolute; left: -32px; top: -25px; width: 56px; line-height: 34px; border-radius: 17px; background: #8eaace; color: #fff; font-weight: 600; text-shadow: 2px 2px 2px #56708f; }
  h2.perma { margin-top: 56px; }
  ul { margin-top: 25px; padding-left: 80px; font-size: 28px; }
  li a { color: #2a659e; font-weight: 600; }

  .status {
    position: absolute; left: 0; bottom: 0; z-index: 2; padding: 0 8px 0 10px; font-size: 24px; line-height: 40px; color: #222;
    border: solid #a9a4a1; border-width: 2px 2px 0 0; border-radius: 0 8px 0 10px; background: linear-gradient(to right, #e0d8d5, #d0c8c3);
  }

  .shelf { position: relative; display: flex; height: 104px; padding: 4px 54px 10px; }
  .behind {
    position: absolute; inset: 0 288px 8px 0; border-radius: 0 0 22px 22px;
    background: linear-gradient(#8d8d8d 4px, transparent 4px), linear-gradient(to right, #d4d4d4, #bababa 60px);
  }
  .plus { position: absolute; left: 21px; top: 52px; width: 28px; height: 28px; }
  .dock {
    position: relative; flex: 1; display: flex; align-items: flex-start; padding: 14px 20px 0 14px; border: 1px solid #d9d9d7; border-radius: 24px;
    background: linear-gradient(to right, #c1c1c1, #c7c7c5 30%, #d7d7d6 55%, #dadada 86%, #b9b2a8 91%, #7a6e5c 94%, #716552);
  }
  .apps { flex: 1; display: flex; justify-content: space-between; }
  .apps.few { flex: none; width: 200px; margin-right: 26px; }
  .slot { position: relative; width: 54px; height: 54px; }
  .slot.open::after { content: ""; position: absolute; left: 23px; top: 63px; width: 8px; height: 8px; border-radius: 50%; background: #4a4846; }
  .app { display: block; width: 54px; height: 54px; overflow: visible; filter: drop-shadow(0 1px 1px rgba(0, 0, 0, .25)); }
  .dock i { width: 2px; height: 66px; margin: -3px 23px 0 25px; background: #a3a3a3; }
  .dock i.dim { margin: -3px 18px 0 0; background: #4f4536; }
  .thumb { width: 64px; height: 54px; overflow: visible; margin-right: 16px; }
  .trash { width: 48px; height: 64px; margin-top: -6px; }
  .petal { mix-blend-mode: multiply; opacity: .9; }
  .count { position: absolute; right: -8px; top: -6px; width: 26px; border-radius: 13px; background: #e9584a; color: #fff; font-size: 15px; line-height: 26px; text-align: center; }
  .new { position: absolute; left: 24px; top: 46px; padding: 0 4px; border-radius: 3px; background: #6fe3e1; color: #111; font-size: 12px; font-weight: 700; line-height: 14px; }
  text { font-family: Inter, "Liberation Sans", sans-serif; text-anchor: middle; }
  .may { font-size: 11px; font-weight: 600; fill: #fff; }
  .day { font-size: 32px; font-weight: 300; fill: #333; }
  .tv { font-size: 22px; font-weight: 500; fill: #fff; }
  .letter { font-size: 15px; font-weight: 700; fill: #fff; }
  .mono { font: 700 13px "Liberation Mono", monospace; text-anchor: start; }
  .green { fill: #5ee04a; }
  .five { font-size: 24px; font-weight: 700; fill: #ea9a3e; }
</style>
